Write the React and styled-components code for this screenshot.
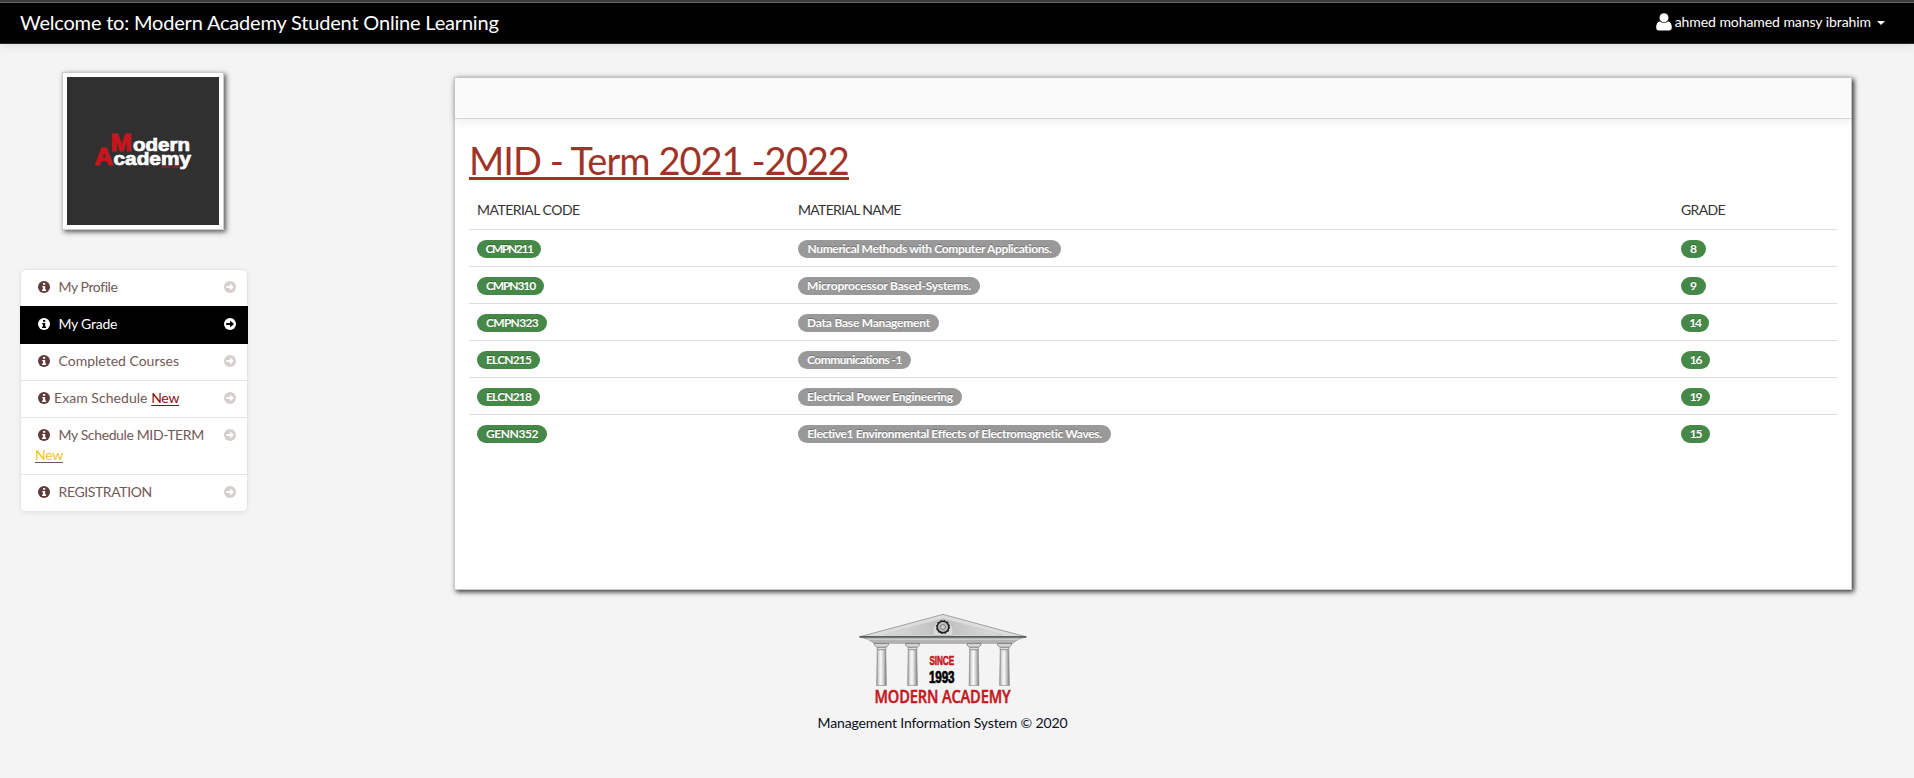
import React from 'react';
import styled, { createGlobalStyle } from 'styled-components';

const GlobalStyle = createGlobalStyle`
  *, *::before, *::after { box-sizing: border-box; }
  html, body { margin: 0; padding: 0; background: #f4f4f4; }
  body {
    min-height: 100vh;
    font-family: Lato, "Open Sans", sans-serif;
    font-size: 14px;
    line-height: 20px;
    color: #333;
  }
`;

const Navbar = styled.header`
  display: flex;
  align-items: center;
  justify-content: space-between;
  height: 44px;
  padding: 0 29px 0 20px;
  background: #000;
  border-top: 2px solid #3c3c3c;
  border-bottom: 1px solid #252525;
  box-shadow: inset 0 1px 0 #666, 0 1px 10px rgba(0, 0, 0, 0.1);
  color: #fff;
`;

const Brand = styled.span`
  padding-bottom: 2px;
  font-size: 20px;
  letter-spacing: -0.19px;
`;

const UserMenu = styled.div`
  display: flex;
  align-items: center;
  padding-bottom: 1px;
  letter-spacing: -0.07px;
  white-space: nowrap;
`;

const UserGlyph = styled.svg`
  width: 16px;
  height: 18px;
  margin-right: 3px;
`;

const Caret = styled.span`
  margin: 2px 0 0 6px;
  border: 4px solid transparent;
  border-top-color: #fff;
  border-bottom: 0;
`;

const Layout = styled.main`
  display: flex;
  align-items: flex-start;
`;

const Sidebar = styled.aside`
  width: 228px;
  margin: 28px 206px 0 20px;
`;

const Photo = styled.div`
  width: 162px;
  height: 158px;
  margin: 0 0 39px 42px;
  padding: 4px;
  background: #fff;
  border: 1px solid #ccc;
  box-shadow: 2px 2px 5px #555;
`;

const PhotoArt = styled.svg`
  display: block;
  width: 152px;
  height: 148px;
`;

const NavList = styled.ul`
  margin: 0;
  padding: 0;
  list-style: none;
  background: #fff;
  border-radius: 6px;
  box-shadow: 0 1px 4px rgba(0, 0, 0, 0.065);
`;

const NavItem = styled.li`
  display: flex;
  align-items: flex-start;
  margin-bottom: -1px;
  padding: 7px 11px 9px 14px;
  border: 1px solid ${p => (p.$active ? '#000' : '#e5e5e5')};
  background: ${p => (p.$active ? '#000' : 'transparent')};
  color: ${p => (p.$active ? '#fff' : '#735858')};
  position: relative;
  z-index: ${p => (p.$active ? 1 : 0)};

  &:first-child { border-radius: 6px 6px 0 0; }
  &:last-child { border-radius: 0 0 6px 6px; margin-bottom: 0; }
`;

const NavText = styled.div`
  flex: 1;
  white-space: nowrap;
`;

const NavLabel = styled.span`
  letter-spacing: ${p => p.$track || 0}px;
`;

const NewTag = styled.span`
  color: ${p => p.$color};
  letter-spacing: -0.26px;
  text-decoration: underline;
  text-decoration-color: ${p => p.$line};
  text-underline-offset: 2px;
`;

const InfoGlyph = styled.svg`
  width: 12px;
  height: 12px;
  margin: 0 ${p => p.$gap}px 0 3px;
  vertical-align: -1px;
  color: ${p => (p.$active ? '#fff' : '#5f3b3b')};
`;

const ArrowGlyph = styled.svg`
  width: 12px;
  height: 12px;
  margin-top: 4px;
  color: ${p => (p.$active ? '#fff' : '#5f3b3b')};
  opacity: ${p => (p.$active ? 1 : 0.25)};
`;

const Panel = styled.section`
  width: 1398px;
  height: 513px;
  margin-top: 33px;
  background: #fff;
  border: 1px solid #ccc;
  box-shadow: 2px 2px 5px #333;
`;

const PanelHeader = styled.div`
  height: 41px;
  background: #fafafa;
  border-bottom: 1px solid #d4d4d4;
  box-shadow: 0 1px 10px rgba(0, 0, 0, 0.1);
`;

const PanelBody = styled.div`
  padding: 21px 14px 0;
`;

const Heading = styled.h1`
  margin: 0;
  font-size: 38px;
  font-weight: 400;
  line-height: 40px;
  letter-spacing: -0.96px;
  color: #a03328;
  text-decoration: underline;
  text-decoration-thickness: 3px;
  text-underline-offset: 2px;
`;

const Table = styled.div`
  margin-top: 12px;
`;

const Row = styled.div`
  display: grid;
  grid-template-columns: 321px 883px 1fr;
  align-items: center;
  height: 37px;
  border-top: ${p => (p.$head ? '0' : '1px solid #ddd')};

  & > * { margin-left: 8px; }
`;

const HeadCell = styled.span`
  margin-top: -1px;
  letter-spacing: ${p => p.$track}px;
`;

const Badge = styled.span`
  width: ${p => p.$w}px;
  height: 18px;
  margin-top: 2px;
  border-radius: 9px;
  background: ${p => (p.$tone === 'green' ? '#468847' : '#999')};
  color: #fff;
  font-size: 12px;
  font-weight: 700;
  line-height: 17px;
  letter-spacing: ${p => p.$track}px;
  text-align: center;
  text-shadow: 0 -1px 0 rgba(0, 0, 0, 0.25);
  white-space: nowrap;
`;

const Footer = styled.footer`
  display: flex;
  flex-direction: column;
  align-items: center;
  width: 1885px;
  margin-top: 21px;
  color: #0c0c1c;
  letter-spacing: -0.15px;
`;

const Emblem = styled.svg`
  width: 170px;
  height: 100px;
  margin-bottom: 2px;
  overflow: visible;
`;

const courses = [
  { code: 'CMPN211', cw: 64, ct: -1.4, name: 'Numerical Methods with Computer Applications.', nw: 263, nt: -0.35, grade: '8', gw: 25 },
  { code: 'CMPN310', cw: 67, ct: -1.1, name: 'Microprocessor Based-Systems.', nw: 182, nt: -0.2, grade: '9', gw: 25 },
  { code: 'CMPN323', cw: 70, ct: -0.69, name: 'Data Base Management', nw: 141, nt: -0.22, grade: '14', gw: 28 },
  { code: 'ELCN215', cw: 63, ct: -0.84, name: 'Communications -1', nw: 113, nt: -0.54, grade: '16', gw: 29 },
  { code: 'ELCN218', cw: 63, ct: -0.84, name: 'Electrical Power Engineering', nw: 164, nt: -0.22, grade: '19', gw: 29 },
  { code: 'GENN352', cw: 70, ct: -0.43, name: 'Elective1 Environmental Effects of Electromagnetic Waves.', nw: 313, nt: -0.34, grade: '15', gw: 29 },
];

const links = [
  { label: 'My Profile', track: -0.42 },
  { label: 'My Grade', track: -0.24, active: true },
  { label: 'Completed Courses' },
  { label: 'Exam Schedule', track: 0.05, gap: 4, tag: { color: '#8b0d0d', line: '#5f2020' } },
  { label: 'My Schedule MID-TERM', track: -0.37, tag: { color: '#f0c419', line: '#735858', below: true } },
  { label: 'REGISTRATION', track: -0.38 },
];

function InfoIcon({ active, gap = 8.5 }) {
  return (
    <InfoGlyph viewBox="0 0 12 12" $active={active} $gap={gap}>
      <circle cx="6" cy="6" r="6" fill="currentColor" />
      <path d="M5 2h2.2v1.8H5zM4.2 5h3v3.6h.9V10H4V8.600h1V6.300h-.8z" fill={active ? '#000' : '#fff'} />
    </InfoGlyph>
  );
}

function ArrowIcon({ active }) {
  return (
    <ArrowGlyph viewBox="0 0 12 12" $active={active}>
      <circle cx="6" cy="6" r="6" fill="currentColor" />
      <path d="M2.200 5.100h3.900V2.600L10 6 6.100 9.400V6.900H2.200z" fill={active ? '#000' : '#fff'} />
    </ArrowGlyph>
  );
}

function AcademyPhoto() {
  return (
    <PhotoArt viewBox="0 0 152 148">
      <rect width="152" height="148" fill="#303030" />
      <g fontFamily="'Liberation Sans', Arial, sans-serif" fontWeight="700">
        <text x="43.500" y="73.500" fontSize="23.500" textLength="21.500" lengthAdjust="spacingAndGlyphs" fill="#c4161c" stroke="#c4161c" strokeWidth="1.200">M</text>
        <text x="27.500" y="87.500" fontSize="24" textLength="18.500" lengthAdjust="spacingAndGlyphs" fill="#c4161c" stroke="#c4161c" strokeWidth="1.200">A</text>
        <text x="66" y="74" fontSize="17.500" textLength="57" lengthAdjust="spacingAndGlyphs" fill="#fff" stroke="#fff" strokeWidth="0.700">odern</text>
        <text x="46.500" y="87.500" fontSize="17.500" textLength="77.500" lengthAdjust="spacingAndGlyphs" fill="#fff" stroke="#fff" strokeWidth="0.700">cademy</text>
        <text x="94" y="90.500" fontSize="3.500" textLength="18" lengthAdjust="spacingAndGlyphs" fill="#c4161c">Since 1993</text>
      </g>
    </PhotoArt>
  );
}

function AcademyEmblem() {
  return (
    <Emblem viewBox="0 0 170 100">
      <defs>
        <linearGradient id="shaft" x1="0" x2="1" y1="0" y2="0">
          <stop offset="0" stopColor="#8a8a8a" />
          <stop offset="0.2" stopColor="#d8d8d8" />
          <stop offset="0.45" stopColor="#fafafa" />
          <stop offset="0.75" stopColor="#c0c0c0" />
          <stop offset="1" stopColor="#777" />
        </linearGradient>
        <linearGradient id="roof" x1="0" x2="1" y1="0" y2="0">
          <stop offset="0" stopColor="#dedede" />
          <stop offset="0.5" stopColor="#bdbdbd" />
          <stop offset="1" stopColor="#dedede" />
        </linearGradient>
      </defs>
      <path d="M1.500 25.800L85 3.400l83 22.400z" fill="#dcdcdc" stroke="#999" strokeWidth="0.9" />
      <path d="M25 24L85 7.500 145 24z" fill="url(#roof)" stroke="#c9c9c9" strokeWidth="0.7" />
      <path d="M75 24.500v-5a10 10 0 0 1 20 0v5z" fill="#d9d9d9" stroke="#b5b5b5" strokeWidth="0.6" />
      <path d="M2 26h166q-10 2.500-13 6.300H15.500Q12.500 28.500 2 26z" fill="#b3b3b3" stroke="#888" strokeWidth="0.6" />
      <path d="M1.500 25.900h167" stroke="#3e4a44" strokeWidth="1.300" />
      <path d="M9 28.300h152" stroke="#ddd" strokeWidth="0.8" />
      <circle cx="85" cy="16" r="5.800" fill="#bbb" stroke="#222" strokeWidth="1.600" />
      <circle cx="85" cy="16" r="6.500" fill="none" stroke="#222" strokeWidth="1.200" strokeDasharray="1.500 1.900" />
      <circle cx="85" cy="16" r="2.500" fill="#ccc" stroke="#777" strokeWidth="0.9" />
      {[23.5, 54.5, 116, 146.5].map(x => (
        <g key={x} transform={`translate(${x} 0)`}>
          <path d="M-7 32.500H7V34L4.800 36.200H-4.800L-7 34z" fill="#d4d4d4" stroke="#777" strokeWidth="0.8" />
          <path d="M-4.500 36.500H4.500V38.500H-4.500z" fill="#ddd" stroke="#888" strokeWidth="0.7" />
          <path d="M-4.300 38.800H4.300L4.900 74.500H-4.900z" fill="url(#shaft)" stroke="#888" strokeWidth="0.6" />
        </g>
      ))}
      <g fontFamily="'Liberation Sans', Arial, sans-serif" fontWeight="700">
        <text x="71.500" y="53.500" fontSize="13" textLength="24.500" lengthAdjust="spacingAndGlyphs" fill="#c4161c" stroke="#c4161c" strokeWidth="0.6">SINCE</text>
        <text x="71" y="72" fontSize="16" textLength="25.500" lengthAdjust="spacingAndGlyphs" fill="#000" stroke="#000" strokeWidth="0.7">1993</text>
      </g>
      <text x="16.500" y="91.700" fontSize="17.500" fontFamily="'Open Sans', sans-serif" fontWeight="600" textLength="136" lengthAdjust="spacingAndGlyphs" fill="#c4161c" stroke="#c4161c" strokeWidth="0.5">MODERN ACADEMY</text>
    </Emblem>
  );
}

export default function App() {
  return (
    <>
      <GlobalStyle />
      <Navbar>
        <Brand>Welcome to: Modern Academy Student Online Learning</Brand>
        <UserMenu>
          <UserGlyph viewBox="0 0 16 18">
            <path d="M3.800 8.200C1.200 8.700.2 11.500.2 14.300.2 16.500 1.300 17.500 3 17.500h10c1.700 0 2.800-1 2.800-3.200 0-2.800-1-5.600-3.600-6.100C11 9.300 9.600 9.800 8 9.800S5 9.300 3.800 8.200z" fill="#fff" />
            <circle cx="8" cy="4.700" r="4.500" fill="#fff" />
          </UserGlyph>
          ahmed mohamed mansy ibrahim
          <Caret />
        </UserMenu>
      </Navbar>
      <Layout>
        <Sidebar>
          <Photo><AcademyPhoto /></Photo>
          <NavList>
            {links.map(({ label, track, active, gap, tag }) => (
              <NavItem key={label} $active={active}>
                <NavText>
                  <InfoIcon active={active} gap={gap} />
                  <NavLabel $track={track}>{label}</NavLabel>
                  {tag && (tag.below ? <br /> : ' ')}
                  {tag && <NewTag $color={tag.color} $line={tag.line}>New</NewTag>}
                </NavText>
                <ArrowIcon active={active} />
              </NavItem>
            ))}
          </NavList>
        </Sidebar>
        <Panel>
          <PanelHeader />
          <PanelBody>
            <Heading>MID - Term 2021 -2022</Heading>
            <Table>
              <Row $head>
                <HeadCell $track={-0.53}>MATERIAL CODE</HeadCell>
                <HeadCell $track={-0.69}>MATERIAL NAME</HeadCell>
                <HeadCell $track={-0.64}>GRADE</HeadCell>
              </Row>
              {courses.map(c => (
                <Row key={c.code}>
                  <Badge $tone="green" $w={c.cw} $track={c.ct}>{c.code}</Badge>
                  <Badge $w={c.nw} $track={c.nt}>{c.name}</Badge>
                  <Badge $tone="green" $w={c.gw} $track={c.grade.length > 1 ? -1.2 : 0}>{c.grade}</Badge>
                </Row>
              ))}
            </Table>
          </PanelBody>
        </Panel>
      </Layout>
      <Footer>
        <AcademyEmblem />
        <span>Management Information System © 2020</span>
      </Footer>
    </>
  );
}
